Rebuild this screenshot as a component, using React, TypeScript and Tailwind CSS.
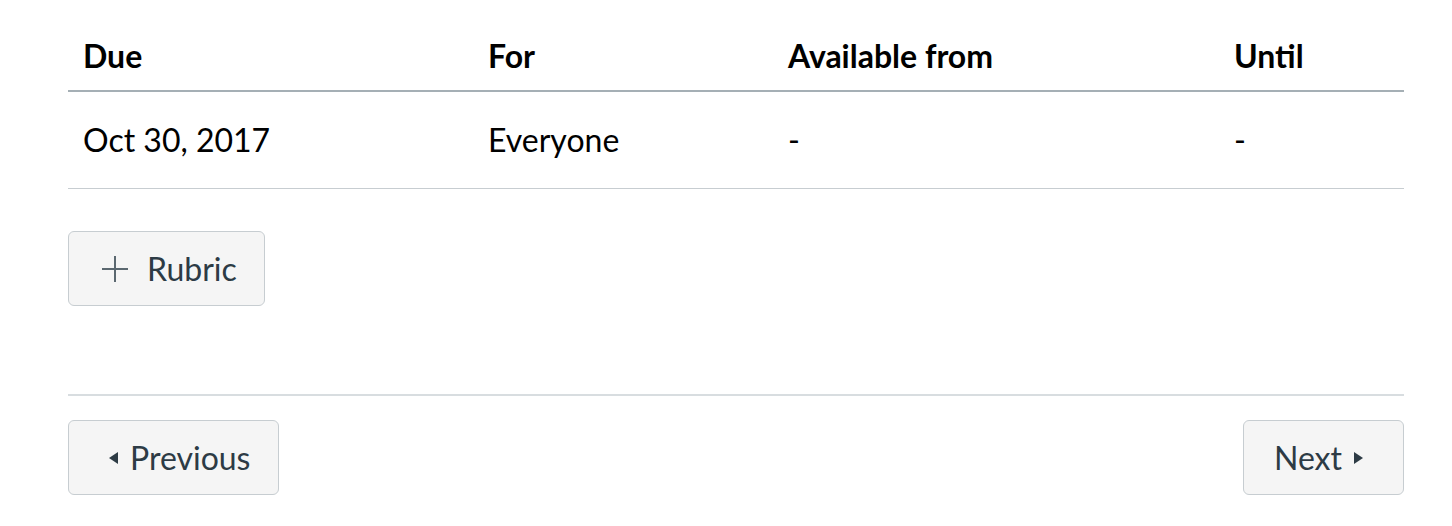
import React from "react";

const cell = "px-[15px]";

export default function App() {
  return (
    <div className="w-[1452px] h-[526px] bg-white overflow-hidden" style={{ fontFamily: "Lato, 'Open Sans', sans-serif" }}>
      <div className="mx-[68px] w-[1336px] pt-[26px]">
        {/* table */}
        <div className="grid grid-cols-[405px_300px_446px_185px] text-[32px] leading-[48px] text-black">
          <div className={`${cell} font-bold pt-[6px] pb-[10px] border-b-2 border-[#a5afb5]`}>Due</div>
          <div className={`${cell} font-bold pt-[6px] pb-[10px] border-b-2 border-[#a5afb5]`}>For</div>
          <div className={`${cell} font-bold pt-[6px] pb-[10px] border-b-2 border-[#a5afb5]`}>Available from</div>
          <div className={`${cell} font-bold pt-[6px] pb-[10px] border-b-2 border-[#a5afb5]`}>Until</div>
          <div className={`${cell} py-[24px] border-b border-[#c7cdd1]`}>Oct 30, 2017</div>
          <div className={`${cell} py-[24px] border-b border-[#c7cdd1]`}>Everyone</div>
          <div className={`${cell} py-[24px] border-b border-[#c7cdd1]`}>-</div>
          <div className={`${cell} py-[24px] border-b border-[#c7cdd1]`}>-</div>
        </div>

        {/* rubric button */}
        <div className="mt-[42px]">
          <button className="flex items-center h-[75px] pl-[33px] pr-[27px] bg-[#f5f5f5] border border-[#c7cdd1] rounded-[6px] text-[32px] text-[#2d3b45]">
            <svg width="26" height="26" viewBox="0 0 26 26" className="mr-[19px]">
              <path d="M13 0V26M0 13H26" stroke="#5b6870" strokeWidth="2" />
            </svg>
            <span>Rubric</span>
          </button>
        </div>

        {/* divider */}
        <div className="mt-[88px] border-t-2 border-[#d8dde0]" />

        {/* pager */}
        <div className="mt-[24px] flex justify-between">
          <button className="flex items-center h-[75px] pl-[40px] pr-[28px] bg-[#f5f5f5] border border-[#c7cdd1] rounded-[6px] text-[32px] text-[#2d3b45]">
            <svg width="9" height="12" viewBox="0 0 9 12" className="mr-[12px]">
              <path d="M9 0V12L0 6Z" fill="#2d3b45" />
            </svg>
            <span>Previous</span>
          </button>
          <button className="flex items-center h-[75px] pl-[30px] pr-[40px] bg-[#f5f5f5] border border-[#c7cdd1] rounded-[6px] text-[32px] text-[#2d3b45]">
            <span>Next</span>
            <svg width="9" height="12" viewBox="0 0 9 12" className="ml-[12px]">
              <path d="M0 0V12L9 6Z" fill="#2d3b45" />
            </svg>
          </button>
        </div>
      </div>
    </div>
  );
}
